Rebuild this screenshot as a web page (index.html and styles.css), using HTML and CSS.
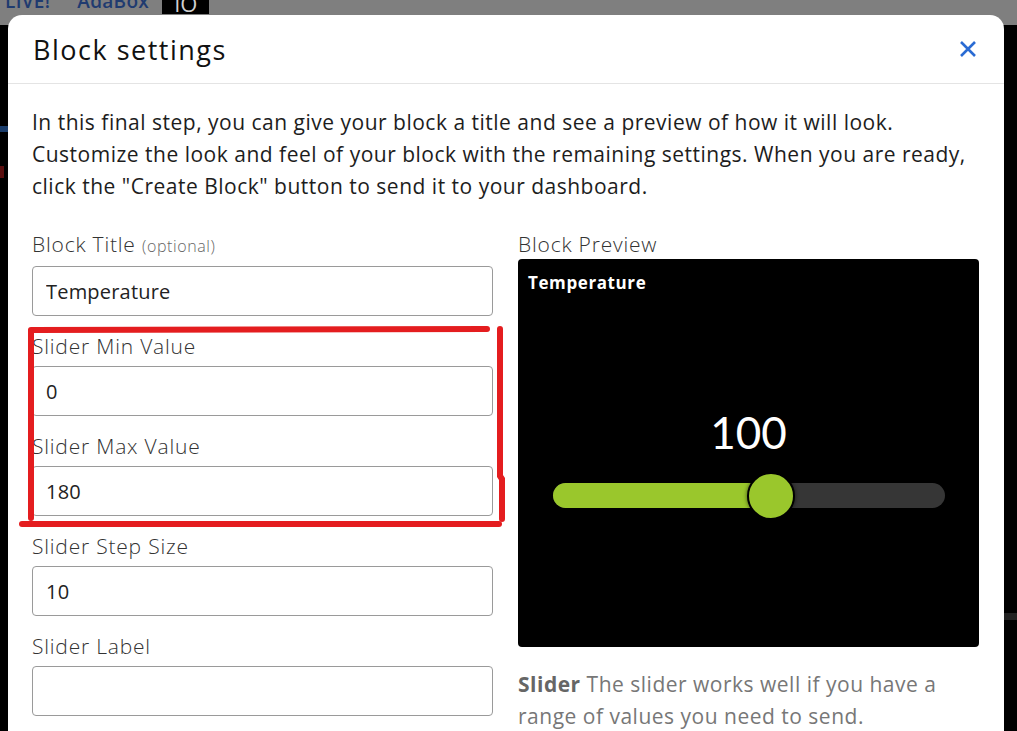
FILE: index.html
```html
<!DOCTYPE html>
<html>
<head>
<meta charset="utf-8">
<link rel="stylesheet" href="styles.css">
</head>
<body>
<div class="page">
  <header class="topbar">
    <span class="nav-item">LIVE!</span>
    <span class="nav-item">AdaBox</span>
    <span class="nav-io">IO</span>
  </header>
  <div class="backdrop">
    <div class="side side-left">
      <span class="mark mark-blue"></span>
      <span class="mark mark-red"></span>
    </div>
    <div class="side side-right">
      <span class="mark mark-gray"></span>
    </div>
  </div>
</div>

<div class="modal">
  <div class="modal-header">
    <h2 class="modal-title">Block settings</h2>
    <button class="close" aria-label="Close">
      <svg width="18" height="18" viewBox="0 0 18 18"><path d="M2 2 L16 16 M16 2 L2 16" stroke="#2a6bd3" stroke-width="2.6" fill="none"/></svg>
    </button>
  </div>
  <div class="modal-body">
    <p class="intro">In this final step, you can give your block a title and see a preview of how it will look. Customize the look and feel of your block with the remaining settings. When you are ready, click the "Create Block" button to send it to your dashboard.</p>
    <div class="columns">
      <div class="col">
        <div class="field">
          <label class="label">Block Title <small>(optional)</small></label>
          <input class="input" type="text" value="Temperature">
        </div>
        <div class="field">
          <label class="label">Slider Min Value</label>
          <input class="input" type="text" value="0">
        </div>
        <div class="field">
          <label class="label">Slider Max Value</label>
          <input class="input" type="text" value="180">
        </div>
        <div class="field">
          <label class="label">Slider Step Size</label>
          <input class="input" type="text" value="10">
        </div>
        <div class="field">
          <label class="label">Slider Label</label>
          <input class="input" type="text" value="">
        </div>
      </div>
      <div class="col">
        <div class="label preview-label">Block Preview</div>
        <div class="preview">
          <div class="preview-title">Temperature</div>
          <div class="preview-value">100</div>
          <div class="slider">
            <div class="track">
              <div class="fill" style="width:55.6%"></div>
              <div class="thumb" style="left:55.6%"></div>
            </div>
          </div>
        </div>
        <p class="desc"><strong>Slider</strong> The slider works well if you have a range of values you need to send.</p>
      </div>
    </div>
  </div>
</div>

<svg class="annotation" width="1017" height="731" viewBox="0 0 1017 731">
  <g stroke="#e41d1f" stroke-width="6" stroke-linecap="round" fill="none">
    <path d="M31 330 L487 329"/>
    <path d="M31 331 L31 518"/>
    <path d="M500 329 L500 476 L502 479 L502 519"/>
    <path d="M22 524 L499 524"/>
  </g>
</svg>
</body>
</html>
```
FILE: styles.css
```css
* { box-sizing: border-box; }
html, body { margin: 0; padding: 0; }
body {
  width: 1017px;
  height: 731px;
  overflow: hidden;
  background: #000;
  font-family: "Open Sans", Lato, "Liberation Sans", sans-serif;
  position: relative;
}
.page { display: flex; flex-direction: column; height: 731px; }
.topbar {
  height: 25px;
  background: #7f7f7f;
  display: flex;
  align-items: flex-start;
  padding-left: 5px;
  gap: 27px;
  overflow: hidden;
}
.nav-item {
  color: #1f3b70;
  font-size: 19px;
  font-weight: 600;
  line-height: 20px;
  margin-top: -9px;
  letter-spacing: 0.3px;
}
.nav-io {
  background: #000;
  color: #cfcfcf;
  font-size: 22px;
  line-height: 22px;
  height: 14px;
  width: 47px;
  margin-left: -14px;
  padding-left: 12px;
  overflow: hidden;
  display: flex;
  align-items: flex-end;
}
.backdrop { flex: 1; display: flex; justify-content: space-between; }
.side { display: flex; flex-direction: column; }
.side-left { width: 8px; }
.side-right { width: 13px; }
.mark { display: block; }
.mark-blue { margin-top: 101px; height: 6px; background: #1b3d6b; }
.mark-red { margin-top: 34px; height: 12px; width: 4px; background: #5a0e0e; }
.mark-gray { margin-top: 588px; height: 7px; background: #222; }

.modal {
  position: absolute;
  left: 8px;
  top: 15px;
  width: 996px;
  bottom: 0;
  background: #fff;
  border-radius: 14px 14px 0 0;
  overflow: hidden;
}
.modal-header {
  height: 69px;
  border-bottom: 1px solid #e4e4e4;
  display: flex;
  align-items: center;
  justify-content: space-between;
  padding: 0 27px 0 25px;
}
.modal-title {
  margin: 0;
  font-size: 27px;
  font-weight: 500;
  color: #111;
  letter-spacing: 1.5px;
}
.close {
  border: 0;
  background: none;
  padding: 0;
  width: 18px;
  height: 18px;
  display: flex;
}
.modal-body { padding: 22px 25px 0 24px; }
.intro {
  margin: 0;
  font-size: 21px;
  line-height: 32px;
  color: #1d1d1d;
  letter-spacing: 0.5px;
}
.columns {
  display: grid;
  grid-template-columns: 461px 461px;
  column-gap: 25px;
  margin-top: 30px;
}
.col { display: flex; flex-direction: column; }
.field { display: flex; flex-direction: column; margin-bottom: 18px; }
.label {
  font-size: 21px;
  font-weight: 300;
  line-height: 24px;
  color: #333;
  margin-bottom: 8px;
  letter-spacing: 0.8px;
}
.label small { font-size: 16px; color: #666; letter-spacing: 0.6px; }
.input {
  height: 50px;
  border: 1px solid #9a9a9a;
  border-radius: 4px;
  padding: 0 13px;
  font-family: inherit;
  font-size: 20px;
  letter-spacing: 0.2px;
  color: #222;
  background: #fff;
}
.preview-label { margin-bottom: 3px; }
.preview {
  height: 388px;
  background: #000;
  border-radius: 4px;
  padding: 10px 10px 0 10px;
  display: flex;
  flex-direction: column;
}
.preview-title {
  color: #fff;
  font-weight: 700;
  font-size: 17px;
  line-height: 28px;
  letter-spacing: 0.6px;
}
.preview-value {
  color: #fff;
  font-family: Lato, "Open Sans", sans-serif;
  font-size: 44px;
  font-weight: 400;
  text-align: center;
  line-height: 50px;
  margin-top: 110px;
}
.slider { padding: 0 24px 0 25px; margin-top: 26px; }
.track {
  position: relative;
  height: 25px;
  border-radius: 13px;
  background: #363636;
}
.fill {
  height: 25px;
  border-radius: 13px 0 0 13px;
  background: #9ac72c;
}
.thumb {
  position: absolute;
  top: 50%;
  width: 48px;
  height: 48px;
  margin: -24px 0 0 -24px;
  border-radius: 50%;
  background: #9ac72c;
  border: 2px solid #000;
  box-shadow: 0 0 4px rgba(0,0,0,0.6);
}
.desc {
  margin: 21px 0 0;
  font-size: 21px;
  line-height: 32px;
  color: #777;
  letter-spacing: 0.5px;
}
.desc strong { color: #666; font-weight: 700; }
.annotation { position: absolute; left: 0; top: 0; pointer-events: none; }
```
